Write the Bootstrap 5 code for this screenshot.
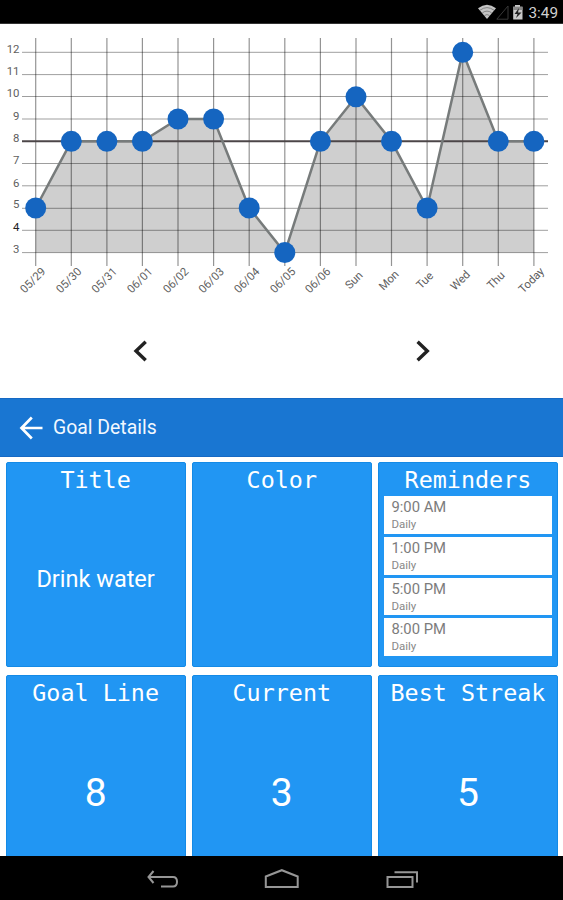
<!DOCTYPE html>
<html lang="en">
<head>
<meta charset="utf-8">
<meta name="viewport" content="width=device-width, initial-scale=1">
<title>Goal Details</title>
<link href="https://cdn.jsdelivr.net/npm/bootstrap@5.3.0/dist/css/bootstrap.min.css" rel="stylesheet">
<style>
body{font-family:Roboto,"Noto Sans",sans-serif;width:563px;height:900px;background:#fff}
.status-bar{height:24px;background:#000;color:#d0d0d0;font-size:15.3px;line-height:24px;padding:1px 5px 0 0;border-bottom:1px solid #333}
.clock{padding-top:4px}
.chart-area{height:290px}
.pager{height:84px;padding:25px 131px 0 132px}
.app-bar{height:59px;background:#1976d2;border-top:1px solid #1669c4;border-bottom:1px solid #1669c4;padding:0 19px;gap:10px;font-size:19.4px;color:#f2f8ff}
.app-bar span{padding-top:1px}
.tiles{display:grid;grid-template-columns:repeat(3,180px);column-gap:6.2px;row-gap:8px;grid-template-rows:205px 205px;padding:5px 0 0 5.6px;min-height:0}
.tile{background:#2196f3;border:1px solid #148ae6;border-radius:2px;color:#fff}
.tile-title{font:23.4px/33px "DejaVu Sans Mono",monospace;white-space:nowrap;padding-top:1px;height:33px}
.goal-name{font-size:23.5px;padding-bottom:3px}
.figure-value{font-size:39px;padding-bottom:2px}
.reminder-list{gap:3px;padding:0 5px}
.reminder{background:#fff;height:37.8px;padding:3px 7.5px 0;color:#7c7c7c;font-size:14.8px;line-height:17px}
.reminder .freq{font-size:11.5px;line-height:17px;color:#888}
.nav-keys{height:44px;background:#000}
.grid-x{stroke:#000;stroke-opacity:.42;stroke-width:1.2}
.grid-y{stroke:#000;stroke-opacity:.38;stroke-width:1}
.axis{font-size:11.4px;fill:#606060}
</style>
<script src="https://cdn.jsdelivr.net/npm/bootstrap@5.3.0/dist/js/bootstrap.bundle.min.js"></script>
</head>
<body class="d-flex flex-column overflow-hidden m-0">
<header class="status-bar d-flex justify-content-end align-items-center flex-shrink-0">
  <svg width="49" height="23" viewBox="476 0 49 23" aria-hidden="true">
    <path d="M478 7.2Q487 .2 496 7.2L487 18Z" fill="#c4c4c4"/>
    <path d="M480 9.2Q487 4 494 9.2M482.4 11.8Q487 8.4 491.6 11.8M484.5 14.5Q487 12.6 489.5 14.5" fill="none" stroke="#666" stroke-width=".7"/>
    <path d="M496.8 18.2H508V5Z" fill="none" stroke="#383838" stroke-width="1"/>
    <path d="M513.2 5.7H515V4H520V5.7H522.5V18.5H513.2Z" fill="#c9c9c9"/>
    <path d="M513.2 5.7H522.5V9H513.2Z" fill="#888"/>
    <path d="M519 7L514.5 13H517.5L516 17L521.5 11.5H518Z" fill="#222"/>
  </svg>
  <span class="clock ms-1 lh-1">3:49</span>
</header>
<main class="d-flex flex-column flex-grow-1 overflow-hidden">
<section class="chart-area flex-shrink-0">
<svg class="d-block" width="563" height="290" viewBox="0 24 563 290" role="img" aria-label="Daily totals">
  <path d="M35.7 252.6V208L71.3 141.3H142.4L178 119H213.6L249.2 208L284.8 252.6L320.4 141.3L356 96.8L391.5 141.3L427.1 208L462.7 52.3L498.3 141.3H533.9V252.6Z" fill="#cfcfcf"/>
  <path class="grid-x" d="M35.7 38V266M71.3 38V266M106.9 38V266M142.4 38V266M178 38V266M213.6 38V266M249.2 38V266M284.8 38V266M320.4 38V266M356 38V266M391.5 38V266M427.1 38V266M462.7 38V266M498.3 38V266M533.9 38V266"/>
  <path class="grid-y" d="M22 52.3H548M22 74.6H548M22 96.5H548M22 119H548M22 163.5H548M22 185.8H548M22 208.3H548M22 230.3H548M22 252.6H548"/>
  <path d="M22 141.3H548" stroke="#4c4648" stroke-width="2"/>
  <path d="M35.7 208L71.3 141.3H142.4L178 119H213.6L249.2 208L284.8 252.6L320.4 141.3L356 96.8L391.5 141.3L427.1 208L462.7 52.3L498.3 141.3H533.9" fill="none" stroke="#777b7b" stroke-width="2.5"/>
  <g fill="#1565c0">
    <circle cx="35.7" cy="208" r="10.5"/><circle cx="71.3" cy="141.3" r="10.5"/><circle cx="106.9" cy="141.3" r="10.5"/><circle cx="142.4" cy="141.3" r="10.5"/><circle cx="178" cy="119" r="10.5"/><circle cx="213.6" cy="119" r="10.5"/><circle cx="249.2" cy="208" r="10.5"/><circle cx="284.8" cy="252.6" r="10.5"/><circle cx="320.4" cy="141.3" r="10.5"/><circle cx="356" cy="96.8" r="10.5"/><circle cx="391.5" cy="141.3" r="10.5"/><circle cx="427.1" cy="208" r="10.5"/><circle cx="462.7" cy="52.3" r="10.5"/><circle cx="498.3" cy="141.3" r="10.5"/><circle cx="533.9" cy="141.3" r="10.5"/>
  </g>
  <g class="axis" text-anchor="end">
    <text x="19.5" y="52.8">12</text><text x="19.5" y="74.8">11</text><text x="19.5" y="97">10</text><text x="19.5" y="119.5">9</text><text x="19.5" y="141.5">8</text><text x="19.5" y="163.7">7</text><text x="19.5" y="186.5">6</text><text x="19.5" y="208">5</text><text x="19.5" y="230.5" fill="#222">4</text><text x="19.5" y="253">3</text>
  </g>
  <g class="axis" text-anchor="middle">
    <text transform="translate(35.5 283) rotate(-45)">05/29</text><text transform="translate(71.5 283) rotate(-45)">05/30</text><text transform="translate(107 283) rotate(-45)">05/31</text><text transform="translate(142.5 283) rotate(-45)">06/01</text><text transform="translate(178.5 283) rotate(-45)">06/02</text><text transform="translate(214 283) rotate(-45)">06/03</text><text transform="translate(249.5 283) rotate(-45)">06/04</text><text transform="translate(285.5 283) rotate(-45)">06/05</text><text transform="translate(320.5 283) rotate(-45)">06/06</text><text transform="translate(356.5 283) rotate(-45)">Sun</text><text transform="translate(391.5 283) rotate(-45)">Mon</text><text transform="translate(427.5 283) rotate(-45)">Tue</text><text transform="translate(463 283) rotate(-45)">Wed</text><text transform="translate(498.5 283) rotate(-45)">Thu</text><text transform="translate(534 283) rotate(-45)">Today</text>
  </g>
</svg>
</section>
<nav class="pager d-flex justify-content-between flex-shrink-0" aria-label="Chart pages">
  <svg width="16" height="24" viewBox="0 0 16 24" fill="none" stroke="#222" stroke-width="3.4"><path d="M13.7 2.7L4 12L13.7 21.3"/></svg>
  <svg width="16" height="24" viewBox="0 0 16 24" fill="none" stroke="#222" stroke-width="3.4"><path d="M1.6 2.7L11.3 12L1.6 21.3"/></svg>
</nav>
<div class="app-bar d-flex align-items-center flex-shrink-0">
  <svg width="24" height="24" viewBox="0 0 24 24" fill="none" stroke="#fff" stroke-width="2.7" aria-hidden="true"><path d="M12.8 1.5L2.5 12L12.8 22.5M2.5 12H23.5"/></svg>
  <span>Goal Details</span>
</div>
<section class="tiles flex-grow-1 overflow-hidden">
  <article class="tile d-flex flex-column text-center"><div class="tile-title">Title</div><div class="goal-name flex-grow-1 d-flex align-items-center justify-content-center">Drink water</div></article>
  <article class="tile text-center"><div class="tile-title">Color</div></article>
  <article class="tile"><div class="tile-title text-center">Reminders</div>
    <div class="reminder-list d-flex flex-column">
      <div class="reminder"><div>9:00 AM</div><div class="freq">Daily</div></div>
      <div class="reminder"><div>1:00 PM</div><div class="freq">Daily</div></div>
      <div class="reminder"><div>5:00 PM</div><div class="freq">Daily</div></div>
      <div class="reminder"><div>8:00 PM</div><div class="freq">Daily</div></div>
    </div>
  </article>
  <article class="tile d-flex flex-column text-center"><div class="tile-title">Goal Line</div><div class="figure-value flex-grow-1 d-flex align-items-center justify-content-center">8</div></article>
  <article class="tile d-flex flex-column text-center"><div class="tile-title">Current</div><div class="figure-value flex-grow-1 d-flex align-items-center justify-content-center">3</div></article>
  <article class="tile d-flex flex-column text-center"><div class="tile-title">Best Streak</div><div class="figure-value flex-grow-1 d-flex align-items-center justify-content-center">5</div></article>
</section>
</main>
<footer class="nav-keys flex-shrink-0">
  <svg class="d-block" width="563" height="44" viewBox="0 856 563 44" fill="none" stroke="#969696" stroke-width="2" aria-hidden="true">
    <path d="M153.5 871L148.5 877L153.5 883M148.5 877H173Q177 877 177 881.7Q177 886.5 173 886.5H161"/>
    <path d="M265.8 887V876.5L281.8 870.2L297.7 876.5V887Z"/>
    <path d="M387.5 877H412.5V887H387.5ZM394.5 872.3H417V882.5"/>
  </svg>
</footer>
</body>
</html>
